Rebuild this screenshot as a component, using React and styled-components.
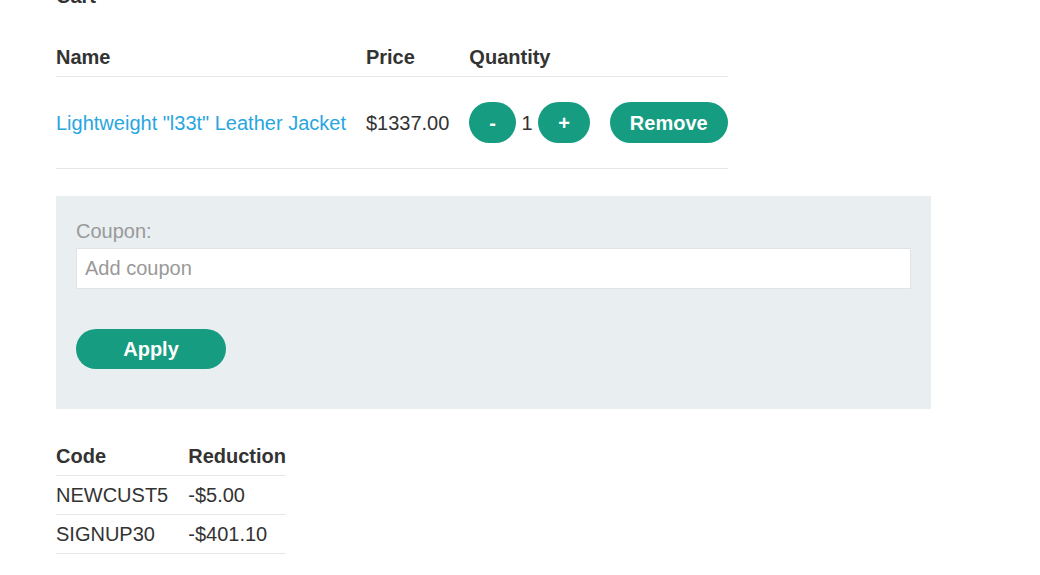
import React, { useState } from 'react';
import styled, { createGlobalStyle } from 'styled-components';

const GlobalStyle = createGlobalStyle`
    html, body {
        margin: 0;
        padding: 0;
        background: #fff;
    }
    body {
        font-family: "Liberation Sans", Arial, sans-serif;
        font-size: 20px;
        line-height: 24px;
        color: #333332;
        overflow: hidden;
    }
`;

const Page = styled.div`
    padding: 0 0 0 56px;
    width: 875px;
`;

const Heading = styled.h2`
    margin: -16px 0 0;
    font-size: 20px;
    line-height: 24px;
    font-weight: 700;
`;

const Table = styled.table`
    border-collapse: collapse;
    margin-top: ${p => p.$top}px;
`;

const HeadCell = styled.th`
    text-align: left;
    font-weight: 700;
    padding: 7px 20px 7px 0;
    border-bottom: 1px solid #e6e6e6;
    white-space: nowrap;

    &:last-child {
        padding-right: 0;
    }
`;

const Cell = styled.td`
    padding: ${p => (p.$tall ? '25px 20px 25px 0' : '7px 20px 7px 0')};
    border-bottom: 1px solid #e6e6e6;
    white-space: nowrap;
    vertical-align: middle;

    &:last-child {
        padding-right: 0;
    }
`;

const ProductLink = styled.a`
    color: #29a6df;
    text-decoration: none;
`;

const Quantity = styled.div`
    display: flex;
    align-items: center;
`;

const Count = styled.span`
    margin: 0 5.5px;
`;

const Button = styled.button`
    font-family: inherit;
    font-size: 20px;
    font-weight: 700;
    line-height: 24px;
    color: #fff;
    background: #169c80;
    border: 0;
    border-radius: 25px;
    height: ${p => p.$h || 41}px;
    padding: 0 20px;
    margin-left: ${p => p.$gap || 0}px;
    cursor: pointer;
    width: ${p => (p.$w ? `${p.$w}px` : 'auto')};
`;

const CouponPanel = styled.form`
    margin-top: 27px;
    background: #e9eef1;
    padding: 23px 20px 40px;
    display: flex;
    flex-direction: column;
    align-items: flex-start;
`;

const Label = styled.label`
    color: #999;
    margin-bottom: 5px;
`;

const Input = styled.input`
    box-sizing: border-box;
    width: 100%;
    height: 41px;
    border: 1px solid #e1e4e6;
    background: #fff;
    font-family: inherit;
    font-size: 20px;
    padding: 0 8px;
    color: #333332;
    margin-bottom: 40px;
    outline: none;

    &::placeholder {
        color: #999;
    }
`;

const discounts = [
    { code: 'NEWCUST5', amount: '-$5.00' },
    { code: 'SIGNUP30', amount: '-$401.10' },
];

export default function App() {
    const [qty, setQty] = useState(1);
    const [coupon, setCoupon] = useState('');

    return (
        <Page>
            <GlobalStyle />
            <Heading>Cart</Heading>
            <Table $top={30}>
                <thead>
                    <tr>
                        <HeadCell>Name</HeadCell>
                        <HeadCell>Price</HeadCell>
                        <HeadCell>Quantity</HeadCell>
                    </tr>
                </thead>
                <tbody>
                    <tr>
                        <Cell $tall>
                            <ProductLink href="#">Lightweight "l33t" Leather Jacket</ProductLink>
                        </Cell>
                        <Cell $tall>$1337.00</Cell>
                        <Cell $tall>
                            <Quantity>
                                <Button type="button" onClick={() => setQty(Math.max(0, qty - 1))}>-</Button>
                                <Count>{qty}</Count>
                                <Button type="button" onClick={() => setQty(qty + 1)}>+</Button>
                                <Button type="button" $gap={20}>Remove</Button>
                            </Quantity>
                        </Cell>
                    </tr>
                </tbody>
            </Table>
            <CouponPanel onSubmit={e => e.preventDefault()}>
                <Label htmlFor="coupon">Coupon:</Label>
                <Input
                    id="coupon"
                    placeholder="Add coupon"
                    value={coupon}
                    onChange={e => setCoupon(e.target.value)}
                />
                <Button type="submit" $h={40} $w={150}>Apply</Button>
            </CouponPanel>
            <Table $top={28}>
                <thead>
                    <tr>
                        <HeadCell>Code</HeadCell>
                        <HeadCell>Reduction</HeadCell>
                    </tr>
                </thead>
                <tbody>
                    {discounts.map(d => (
                        <tr key={d.code}>
                            <Cell>{d.code}</Cell>
                            <Cell>{d.amount}</Cell>
                        </tr>
                    ))}
                </tbody>
            </Table>
        </Page>
    );
}
